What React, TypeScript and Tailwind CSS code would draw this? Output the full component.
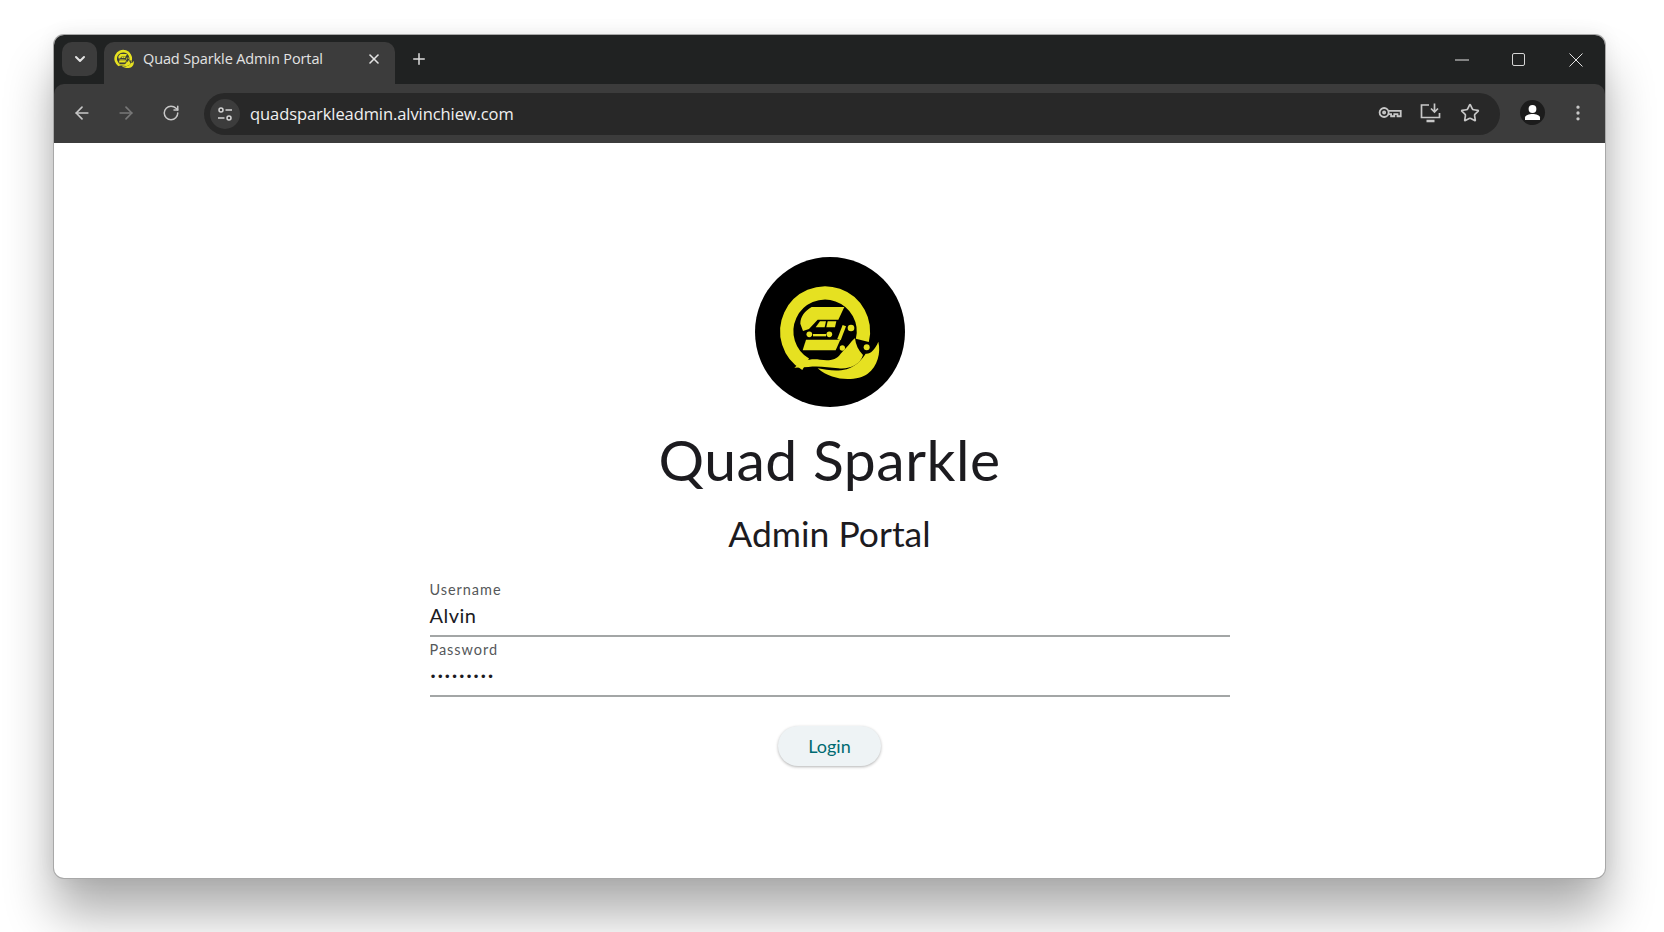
import React from 'react';
import { ChevronDown, X, Plus, ArrowLeft, ArrowRight, RotateCw, Star, EllipsisVertical } from 'lucide-react';

const yellow = '#e6e121';

// the yellow mark, drawn on a 330x315 grid
function LogoMark() {
  return (
    <g fill={yellow}>
      <path d="M92 252 A115 115 0 1 1 262 180" fill="none" stroke={yellow} strokeWidth="40" />
      <path d="M58 262 C85 240 105 234 135 238 C160 241 183 241 197 220 C205 211 218 198 226 188 C232 181 236 176 240 174 C242 193 250 210 264 224 C256 252 224 268 190 264 C160 261 130 256 100 260 Z" />
      <path d="M128 264 C165 270 208 280 246 250 C262 236 268 226 272 220 C286 222 300 208 310 184 C318 216 308 258 278 280 C248 302 176 306 128 264 Z" />
      <path d="M110 80 L208 80 L190 118 L128 118 L102 146 L84 152 L76 130 C76 108 90 92 110 80 Z" />
      <path d="M135 123 H153 L149 141 H122 Z" />
      <path d="M158 123 H184 L180 141 H154 Z" />
      <path d="M114 161 H153 V168 H114 Z" />
      <path d="M208 136 L192 178" fill="none" stroke={yellow} strokeWidth="11" />
      <path d="M93 178 H196 L182 210 H83 Z" />
      <circle cx="103" cy="162" r="8.5" />
      <circle cx="163" cy="162" r="8.5" />
      <circle cx="228" cy="143" r="10" />
      <circle cx="202" cy="203" r="8" />
      <circle cx="275" cy="201" r="9" />
    </g>
  );
}

function Logo({ size }: { size: number }) {
  return (
    <svg width={size} height={size} viewBox="0 0 450 450">
      <circle cx="225" cy="225" r="225" fill="#000" />
      <g transform="translate(60 70)">
        <LogoMark />
      </g>
    </svg>
  );
}

function Toolbar() {
  return (
    <div className="h-[59px] bg-[#3c3c3c] rounded-t-[10px] flex items-center pl-[16px] pr-[11px] pb-[2px] shrink-0">
      <ArrowLeft size={20} className="text-[#c7c7c7] ml-[2px]" />
      <ArrowRight size={20} className="text-[#787878] ml-[24px]" />
      <RotateCw size={18} className="text-[#c7c7c7] ml-[26px]" />
      <div className="ml-[24px] mt-[2px] flex-1 h-[42px] rounded-full bg-[#282828] flex items-center pl-[6px] pr-[20px]">
        <div className="w-[30px] h-[30px] rounded-full bg-[#3c3c3c] flex items-center justify-center">
          <svg width="16" height="16" viewBox="0 0 16 16" fill="none" stroke="#d5d5d5" strokeWidth="1.5">
            <circle cx="4" cy="4" r="2" />
            <path d="M8.5 4H15M1 12H7.5" />
            <circle cx="12" cy="12" r="2" />
          </svg>
        </div>
        <span className="ml-[10px] pt-[1px] text-[16.5px] text-[#f0f0f0] font-['Open_Sans',sans-serif] tracking-[-0.08px]">quadsparkleadmin.alvinchiew.com</span>
        <div className="ml-auto flex items-center -mt-[2px]">
          <svg width="24" height="15" viewBox="0 0 22 14" fill="none" stroke="#c7c7c7" strokeWidth="1.7">
            <circle cx="5.5" cy="7" r="4.2" />
            <circle cx="5.5" cy="7" r="1" />
            <path d="M9.7 5.5H21V10.5H18V8.5H15V10.5H12V8.5H9.7" />
          </svg>
          <svg width="21" height="20" viewBox="0 0 21 20" fill="none" stroke="#c7c7c7" strokeWidth="1.7" className="ml-[18px]">
            <path d="M9 2H1.5V14.5H19.5V10" />
            <path d="M6.5 18H14.5" strokeWidth="2.4" />
            <path d="M14.5 0.5V8.5M11 5.5L14.5 9L18 5.5" />
          </svg>
          <Star size={20} className="text-[#c7c7c7] ml-[19px]" />
        </div>
      </div>
      <div className="ml-[20px] w-[25px] h-[25px] rounded-full bg-[#1c1c1c] flex items-center justify-center">
        <svg width="17" height="17" viewBox="0 0 17 17" fill="#fff">
          <circle cx="8.5" cy="5" r="3.9" />
          <path d="M1 16V13.5C1 11.2 5 10 8.5 10S16 11.2 16 13.5V16Z" />
        </svg>
      </div>
      <EllipsisVertical size={20} className="text-[#c7c7c7] ml-[23px] mr-[6px]" />
    </div>
  );
}

function TabStrip() {
  return (
    <div className="h-[49px] flex shrink-0 pt-[7px] pl-[8px] text-[#e3e3e3]">
      <div className="w-[35px] h-[34px] rounded-[10px] bg-[#3c3c3c] flex items-center justify-center">
        <ChevronDown size={16} strokeWidth={3} className="text-[#e3e3e3]" />
      </div>
      <div className="ml-[7px] w-[291px] h-[42px] rounded-t-[10px] bg-[#3c3c3c] flex items-center pl-[10px] pb-[8px] font-['Open_Sans',sans-serif] text-[14.5px] tracking-[-0.12px]">
        <svg width="20" height="20" viewBox="10 10 305 295" className="shrink-0">
          <LogoMark />
        </svg>
        <span className="ml-[9px] text-[#e3e3e3]">Quad Sparkle Admin Portal</span>
        <X size={16} strokeWidth={2.4} className="ml-auto mr-[13px] text-[#e3e3e3]" />
      </div>
      <Plus size={18} strokeWidth={2} className="ml-[15px] mt-[8px] text-[#dddddd]" />
      <div className="ml-auto flex items-start -mt-[7px] text-[#e3e3e3] pr-[22px]">
        <svg width="14" height="2" viewBox="0 0 14 2" className="mt-[24px]"><path d="M0 1H14" stroke="#e3e3e3" /></svg>
        <div className="ml-[43px] mt-[18px] w-[13px] h-[13px] rounded-[2px] border border-[#d5d5d5]" />
        <svg width="14" height="14" viewBox="0 0 14 14" className="ml-[44px] mt-[18px]"><path d="M0.5 0.5L13.5 13.5M13.5 0.5L0.5 13.5" stroke="#e3e3e3" /></svg>
      </div>
    </div>
  );
}

function Field({ label, children }: { label: string; children: React.ReactNode }) {
  return (
    <div className="border-b-2 border-[#a3a6a6] h-[60px] flex flex-col justify-end pb-[4px]">
      <label className="text-[14.5px] leading-[17px] text-[#55585a] tracking-[0.95px]">{label}</label>
      <div className="h-[33px] flex items-center">{children}</div>
    </div>
  );
}

export default function App() {
  return (
    <div className="w-[1664px] h-[932px] bg-white overflow-hidden pl-[54px] pt-[35px] font-['Lato',sans-serif]">
      <div className="w-[1551px] h-[843px] rounded-[10px] bg-white flex flex-col overflow-hidden shadow-[0_0_0_1px_#a8a8a8,0_36px_50px_rgba(0,0,0,0.32),0_0_20px_rgba(0,0,0,0.08)]">
        <div className="bg-[#202222] flex flex-col shrink-0">
          <TabStrip />
          <Toolbar />
        </div>
        <main className="flex-1 flex flex-col items-center pt-[114px]">
          <Logo size={150} />
          <h1 className="mt-[17px] text-[57px] leading-[70px] text-[#1c1b1f] tracking-[0.55px]">Quad Sparkle</h1>
          <h2 className="mt-[18px] text-[35.5px] leading-[44px] text-[#1c1b1f]">Admin Portal</h2>
          <div className="mt-[21px] w-[800px]">
            <Field label="Username">
              <span className="pt-[1px] text-[20px] text-[#1c1b1f] tracking-[0.5px]">Alvin</span>
            </Field>
            <Field label="Password">
              <span className="pt-[4px] text-[12px] text-[#1c1b1f] tracking-[0.1px] font-['DejaVu_Sans',sans-serif]">•••••••••</span>
            </Field>
          </div>
          <button className="mt-[29px] w-[103px] h-[40px] rounded-full bg-[#eef3f5] text-[18px] text-[#006a71] shadow-[0_1px_3px_rgba(0,0,0,0.3)]">Login</button>
        </main>
      </div>
    </div>
  );
}
